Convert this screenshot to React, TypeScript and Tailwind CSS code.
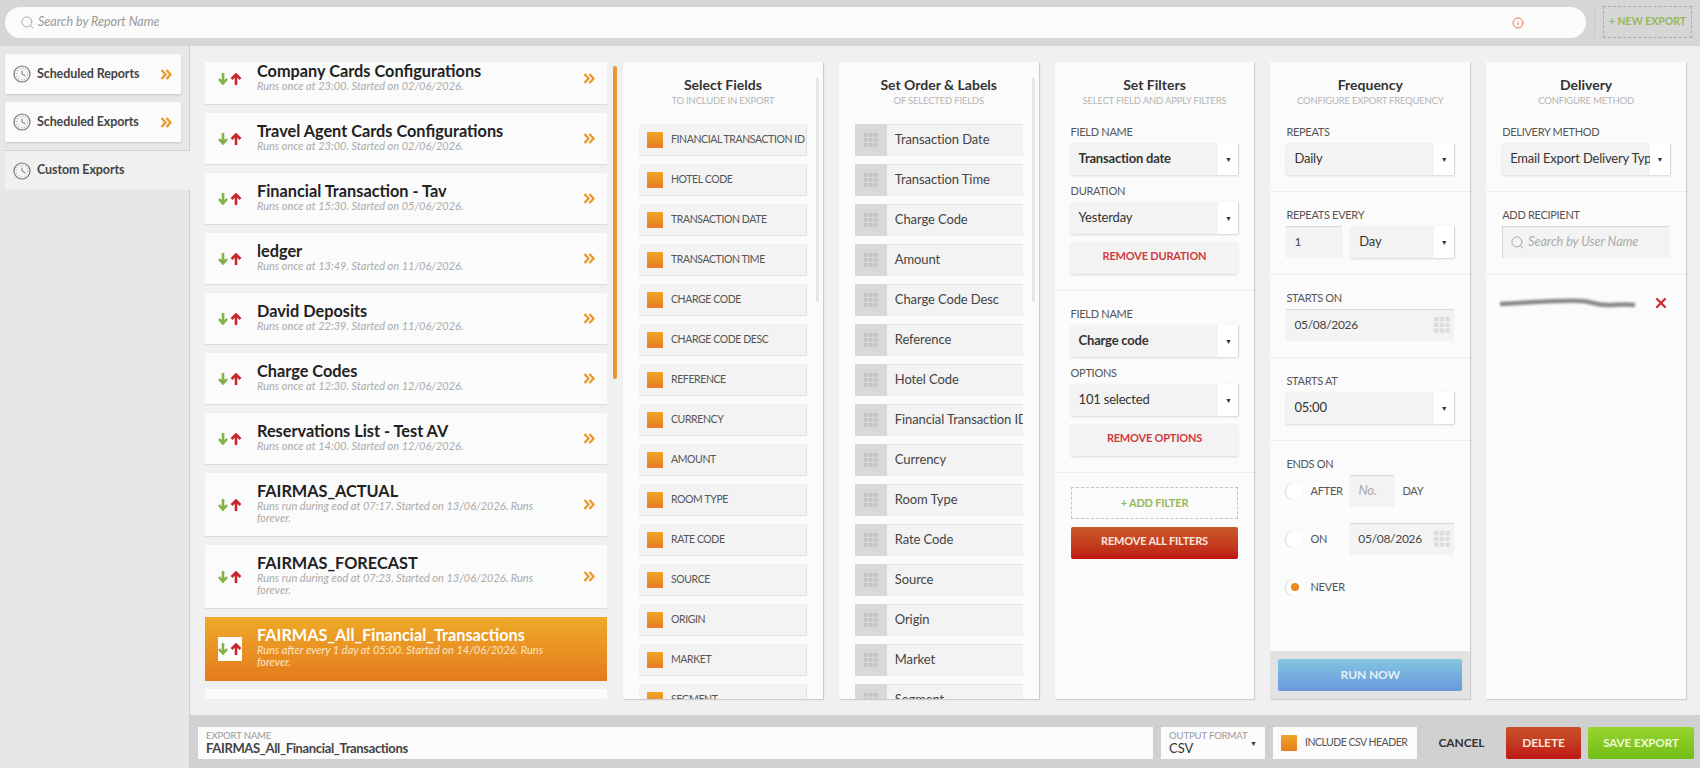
import React from 'react';
import { Info, Search, X } from 'lucide-react';

const REPORTS = [
  { name: 'Company Cards Configurations', sub: 'Runs once at 23:00. Started on 02/06/2026.' },
  { name: 'Travel Agent Cards Configurations', sub: 'Runs once at 23:00. Started on 02/06/2026.' },
  { name: 'Financial Transaction - Tav', sub: 'Runs once at 15:30. Started on 05/06/2026.' },
  { name: 'ledger', sub: 'Runs once at 13:49. Started on 11/06/2026.' },
  { name: 'David Deposits', sub: 'Runs once at 22:39. Started on 11/06/2026.' },
  { name: 'Charge Codes', sub: 'Runs once at 12:30. Started on 12/06/2026.' },
  { name: 'Reservations List - Test AV', sub: 'Runs once at 14:00. Started on 12/06/2026.' },
  { name: 'FAIRMAS_ACTUAL', sub: 'Runs run during eod at 07:17. Started on 13/06/2026. Runs forever.', tall: true },
  { name: 'FAIRMAS_FORECAST', sub: 'Runs run during eod at 07:23. Started on 13/06/2026. Runs forever.', tall: true },
  { name: 'FAIRMAS_All_Financial_Transactions', sub: 'Runs after every 1 day at 05:00. Started on 14/06/2026. Runs forever.', tall: true, active: true },
];

const FIELDS = ['Financial Transaction ID', 'Hotel Code', 'Transaction Date', 'Transaction Time', 'Charge Code', 'Charge Code Desc', 'Reference', 'Currency', 'Amount', 'Room Type', 'Rate Code', 'Source', 'Origin', 'Market', 'Segment'];
const ORDERED = ['Transaction Date', 'Transaction Time', 'Charge Code', 'Amount', 'Charge Code Desc', 'Reference', 'Hotel Code', 'Financial Transaction ID', 'Currency', 'Room Type', 'Rate Code', 'Source', 'Origin', 'Market', 'Segment'];

const Clock = () => (
  <svg width="18" height="18" viewBox="0 0 18 18" fill="none" className="shrink-0">
    <circle cx="9" cy="9" r="8" fill="#f6f6f6" stroke="#777" strokeWidth="1.200" />
    <circle cx="9" cy="9" r="5.800" stroke="#888" strokeWidth="1" strokeDasharray="0.900 2.100" />
    <path d="M9 5.500V9l3.500 2" stroke="#666" strokeWidth="0.900" />
  </svg>
);

const Chevrons = () => (
  <svg width="12" height="11" viewBox="0 0 12 11" fill="none" className="shrink-0">
    <path d="M1.500 1l4 4.500-4 4.500M6.500 1l4 4.500-4 4.500" stroke="#ea9a2d" strokeWidth="2.400" />
  </svg>
);

const Arrows = () => (
  <svg width="24" height="12" viewBox="0 0 24 12" fill="none" className="shrink-0">
    <path d="M5 0v10M1 6l4 4.500L9 6" stroke="#86b04a" strokeWidth="2.600" />
    <path d="M18 12V2M13.500 6L18 1.500 22.500 6" stroke="#c9262e" strokeWidth="2.600" />
  </svg>
);

const Grip = ({ color, size = 14 }: { color: string; size?: number }) => (
  <svg width={size} height={size} viewBox="0 0 14 14" fill={color} className="shrink-0">
    {[0, 5, 10].map((y) =>
      [0, 5, 10].map((x) => <rect key={`${x}-${y}`} x={x} y={y} width="3.800" height="3.800" />)
    )}
  </svg>
);

const Check = () => (
  <div className="h-4 w-4 shrink-0 rounded-[1px] bg-gradient-to-b from-[#f0a428] to-[#e67d1e]" />
);

const Label: React.FC<{ children: React.ReactNode; className?: string }> = ({ children, className = '' }) => (
  <div className={`mb-1 h-[14px] text-[11px] leading-[14px] tracking-[-0.3px] text-[#555] uppercase ${className}`}>{children}</div>
);

const Select: React.FC<{ value: string; bold?: boolean; className?: string }> = ({ value, bold, className = 'w-full' }) => (
  <div className={`flex h-8 ${className} shadow-[0_1px_2px_rgba(0,0,0,0.14)]`}>
    <div className={`flex min-w-0 flex-1 items-center overflow-hidden bg-[#f3f3f3] pb-px pl-2 text-[13px] tracking-[-0.2px] whitespace-nowrap text-[#333] ${bold ? 'font-bold text-[#222]' : ''}`}>
      {value}
    </div>
    <div className="flex w-5 shrink-0 items-center justify-center bg-white text-[7px] text-[#333] shadow-[1px_0_1px_rgba(0,0,0,0.1)]">▼</div>
  </div>
);

const Field: React.FC<{ value: string; className?: string; grid?: boolean }> = ({ value, className = 'w-full', grid }) => (
  <div className={`flex h-8 items-center justify-between bg-[#f3f3f3] pr-[4px] pl-2 text-[12px] tracking-[-0.3px] text-[#444] shadow-[inset_0_1px_1px_rgba(0,0,0,0.12)] ${className}`}>
    <span>{value}</span>
    {grid && <Grip color="#dcdcdc" size={16} />}
  </div>
);

const Btn: React.FC<{ children: React.ReactNode }> = ({ children }) => (
  <div className="mt-2 flex h-8 items-center justify-center bg-[#f3f3f3] pb-[3px] text-[11px] font-bold tracking-[-0.2px] text-[#d23a3f] uppercase shadow-[0_1px_2px_rgba(0,0,0,0.14)]">
    {children}
  </div>
);

const Section: React.FC<{ children: React.ReactNode; last?: boolean }> = ({ children, last }) => (
  <div className={`px-4 pt-4 pb-4 ${last ? '' : 'border-b border-[#ececec]'}`}>{children}</div>
);

const Panel: React.FC<{ title: string; sub: string; children: React.ReactNode; className?: string }> = ({ title, sub, children, className = '' }) => (
  <div className={`relative flex h-[637px] w-[199.8px] shrink-0 flex-col overflow-hidden bg-[#fbfbfb] shadow-[1px_1px_1px_rgba(0,0,0,0.15)] ${className}`}>
    <div className="h-[47px] shrink-0 pt-[13px] text-center">
      <div className="text-[14px] leading-5 font-bold text-[#333]">{title}</div>
      <div className="-mt-px text-[9.500px] leading-[14px] tracking-[-0.2px] text-[#b5b5b5] uppercase">{sub}</div>
    </div>
    {children}
  </div>
);

const Radio: React.FC<{ on?: boolean }> = ({ on }) => (
  <div className="flex h-[17px] w-[17px] shrink-0 items-center justify-center rounded-full bg-white shadow-[-1px_0_1px_rgba(0,0,0,0.15)]">
    {on && <div className="h-2 w-2 rounded-full bg-[#ea8a1e]" />}
  </div>
);

const Tab: React.FC<{ label: string; active?: boolean }> = ({ label, active }) =>
  active ? (
    <div className="relative -mr-px flex h-10 items-center gap-[6px] border-t border-[#d0d0d0] bg-[#f0f0f0] pl-2">
      <Clock />
      <span className="text-[12.500px] font-bold tracking-[-0.1px] text-[#444]">{label}</span>
    </div>
  ) : (
    <div className="mb-2 flex h-10 w-[176px] items-center gap-[6px] bg-[#fbfbfb] pr-[9px] pl-2 shadow-[0_1px_2px_rgba(0,0,0,0.14)]">
      <Clock />
      <span className="flex-1 text-[12.500px] font-bold tracking-[-0.1px] text-[#444]">{label}</span>
      <Chevrons />
    </div>
  );

const ReportCard: React.FC<{ name: string; sub: string; tall?: boolean; active?: boolean }> = ({ name, sub, tall, active }) => (
  <div className={`flex w-full shrink-0 items-center pr-3 pl-[13px] ${tall ? 'h-16' : 'h-[52px]'} ${active ? 'bg-gradient-to-b from-[#eeaa28] to-[#e47a1e]' : 'border-b border-[#dcdcdc] bg-[#fbfbfb]'}`}>
    <div className={`flex h-6 w-6 shrink-0 items-center justify-center ${active ? 'bg-white' : ''}`}>
      <Arrows />
    </div>
    <div className="ml-[15px] min-w-0 flex-1 pr-4 pb-1">
      <div className={`text-[16.300px] leading-[18px] font-bold ${active ? 'text-white' : 'text-[#222]'}`}>{name}</div>
      <div className={`text-[11px] leading-[12px] italic ${active ? 'text-[#fbe6c8]' : 'text-[#aaa]'}`}>{sub}</div>
    </div>
    {!active && <Chevrons />}
  </div>
);

export default function App() {
  return (
    <div className="flex h-[768px] w-[1700px] flex-col overflow-hidden bg-[#f0f0f0] font-[family-name:Lato,sans-serif]">
      {/* top bar */}
      <div className="flex h-[46px] shrink-0 items-start gap-2 bg-[#d6d6d6] pt-[7px] pl-[5px]">
        <div className="flex h-[31px] w-[1581px] items-center rounded-[16px] bg-[#fbfbfb] pr-[62px] pl-[15px]">
          <Search size={15} strokeWidth={1.300} className="text-[#999]" />
          <span className="ml-[3px] text-[12.500px] text-[#999] italic">Search by Report Name</span>
          <Info size={12} className="ml-auto text-[#e8774a]" />
        </div>
        <div className="h-[31px] w-px bg-[#c8c8c8]" />
        <div className="-mt-px flex h-8 w-[89px] items-center justify-center border border-dashed border-[#aaa] text-[10.500px] font-bold whitespace-nowrap text-[#93b95a]">
          + NEW EXPORT
        </div>
      </div>

      <div className="flex min-h-0 flex-1">
        {/* sidebar */}
        <div className="flex w-[190px] shrink-0 flex-col border-r border-[#cfcfcf] bg-[#e7e7e7] pt-2 pl-[5px]">
          <Tab label="Scheduled Reports" />
          <Tab label="Scheduled Exports" />
          <Tab label="Custom Exports" active />
        </div>

        <div className="flex min-w-0 flex-1 flex-col">
          <div className="flex min-h-0 flex-1 pt-4 pl-[15px]">
            {/* report list */}
            <div className="h-[637px] w-[402px] shrink-0 overflow-hidden">
              <div className="-mt-[9px] flex flex-col gap-2">
                {REPORTS.map((r) => (
                  <ReportCard key={r.name} {...r} />
                ))}
                <div className="h-[52px] shrink-0 bg-[#fbfbfb]" />
              </div>
            </div>
            <div className="w-4 shrink-0 pt-1 pl-[6px]">
              <div className="h-[313px] w-1 rounded-sm bg-[#e8982e]" />
            </div>

            <div className="flex gap-4">
              <Panel title="Select Fields" sub="To include in export">
                <div className="absolute top-4 right-1 h-[224px] w-[3px] bg-[#e6e6e6]" />
                <div className="flex flex-col gap-2 pt-[15px] pl-4">
                  {FIELDS.map((f) => (
                    <div key={f} className="flex h-8 w-[168px] shrink-0 items-center gap-2 border-r border-b border-[#e0e0e0] bg-[#f3f3f3] pl-2 text-[10.500px] tracking-[-0.4px] whitespace-nowrap text-[#555] uppercase">
                      <Check />
                      {f}
                    </div>
                  ))}
                </div>
              </Panel>

              <Panel title="Set Order &amp; Labels" sub="Of selected fields">
                <div className="absolute top-4 right-1 h-[224px] w-[3px] bg-[#e6e6e6]" />
                <div className="flex flex-col gap-2 pt-[15px] pl-4">
                  {ORDERED.map((f) => (
                    <div key={f} className="flex h-8 w-[168px] shrink-0 items-center overflow-hidden bg-[#f3f3f3] text-[13px] tracking-[-0.1px] whitespace-nowrap text-[#444] shadow-[inset_0_1px_0_rgba(0,0,0,0.06)]">
                      <div className="mr-2 flex h-8 w-8 shrink-0 items-center justify-center bg-[#d8d8d8]">
                        <Grip color="#c4c4c4" />
                      </div>
                      {f}
                    </div>
                  ))}
                </div>
              </Panel>

              <Panel title="Set Filters" sub="Select field and apply filters">
                <Section>
                  <Label>Field name</Label>
                  <Select value="Transaction date" bold />
                  <Label className="mt-[9px]">Duration</Label>
                  <Select value="Yesterday" />
                  <Btn>Remove duration</Btn>
                </Section>
                <Section>
                  <Label>Field name</Label>
                  <Select value="Charge code" bold />
                  <Label className="mt-[9px]">Options</Label>
                  <Select value="101 selected" />
                  <Btn>Remove options</Btn>
                </Section>
                <div className="px-4 pt-[14px]">
                  <div className="flex h-8 items-center justify-center border border-dashed border-[#c4c4c4] text-[11px] font-bold tracking-[-0.2px] text-[#93b95a]">+ ADD FILTER</div>
                  <div className="mt-2 flex h-8 items-center justify-center rounded-[2px] bg-gradient-to-b from-[#c85a2a] to-[#bf1414] pb-[3px] text-[11px] font-bold tracking-[-0.2px] text-[#fbe6dc]">REMOVE ALL FILTERS</div>
                </div>
              </Panel>

              <Panel title="Frequency" sub="Configure export frequency">
                <Section>
                  <Label>Repeats</Label>
                  <Select value="Daily" />
                </Section>
                <Section>
                  <Label>Repeats every</Label>
                  <div className="flex gap-[9px]">
                    <Field value="1" className="w-[56px]" />
                    <Select value="Day" className="w-[103px]" />
                  </div>
                </Section>
                <Section>
                  <Label>Starts on</Label>
                  <Field value="05/08/2026" grid />
                </Section>
                <Section>
                  <Label>Starts at</Label>
                  <Select value="05:00" />
                </Section>
                <Section last>
                  <Label>Ends on</Label>
                  <div className="flex flex-col gap-4">
                    <div className="flex h-8 items-center text-[11px] tracking-[-0.2px] text-[#555]">
                      <Radio />
                      <span className="ml-[7px] w-[40px]">AFTER</span>
                      <div className="flex h-8 w-11 items-center bg-[#f3f3f3] pl-2 text-[13px] text-[#aaa] italic shadow-[inset_0_1px_1px_rgba(0,0,0,0.12)]">No.</div>
                      <span className="ml-2">DAY</span>
                    </div>
                    <div className="flex h-8 items-center text-[11px] tracking-[-0.2px] text-[#555]">
                      <Radio />
                      <span className="ml-[7px] w-[40px]">ON</span>
                      <Field value="05/08/2026" grid className="w-[104px]" />
                    </div>
                    <div className="flex h-8 items-center text-[11px] tracking-[-0.2px] text-[#555]">
                      <Radio on />
                      <span className="ml-[7px]">NEVER</span>
                    </div>
                  </div>
                </Section>
                <div className="mt-auto h-12 bg-[#e2e2e2] px-2 pt-2">
                  <div className="flex h-8 items-center justify-center rounded-[2px] bg-gradient-to-b from-[#82c6e0] to-[#6a98dc] text-[12px] font-bold tracking-[-0.1px] text-[#e4f1f8]">RUN NOW</div>
                </div>
              </Panel>

              <Panel title="Delivery" sub="Configure method">
                <Section>
                  <Label>Delivery method</Label>
                  <Select value="Email Export Delivery Type" />
                </Section>
                <Section>
                  <Label>Add recipient</Label>
                  <div className="flex h-8 items-center bg-[#f3f3f3] pl-2 text-[12.500px] text-[#aaa] italic shadow-[inset_1px_1px_1px_rgba(0,0,0,0.12)]">
                    <Search size={15} strokeWidth={1.300} className="mr-[3px] text-[#999]" />
                    Search by User Name
                  </div>
                </Section>
                <div className="flex items-center pt-[20px] pr-[17px] pl-[11px]">
                  <svg width="140" height="14" viewBox="0 0 140 14" fill="none">
                    <path d="M3 8C30 7 55 4 85 5c12 1 12 4 26 4 8 0 18-1 27 0" stroke="#8a8a8a" strokeWidth="4.500" className="blur-[1.200px]" />
                  </svg>
                  <X size={16} strokeWidth={3.500} className="ml-auto text-[#cf2f36]" />
                </div>
              </Panel>
            </div>
          </div>

          {/* bottom bar */}
          <div className="flex h-[53px] shrink-0 items-start gap-2 bg-[#d1d1d1] pt-3 pr-[6px] pl-2">
            <div className="flex h-8 w-[955px] flex-col justify-center bg-[#fbfbfb] pl-2">
              <div className="text-[9.500px] leading-[11px] tracking-[-0.1px] text-[#999] uppercase">Export name</div>
              <div className="text-[13px] leading-[15px] font-bold tracking-[-0.35px] text-[#444]">FAIRMAS_All_Financial_Transactions</div>
            </div>
            <div className="relative flex h-8 w-[104px] flex-col justify-center bg-[#fbfbfb] pl-2">
              <div className="text-[9.500px] leading-[11px] tracking-[-0.1px] whitespace-nowrap text-[#999] uppercase">Output format</div>
              <div className="text-[13px] leading-[15px] text-[#333]">CSV</div>
              <span className="absolute top-[11px] right-[8px] text-[7px] text-[#333]">▼</span>
            </div>
            <div className="flex h-8 w-[144px] items-center gap-[8px] bg-[#fbfbfb] pl-2 text-[10.500px] tracking-[-0.5px] whitespace-nowrap text-[#555]">
              <Check />
              INCLUDE CSV HEADER
            </div>
            <div className="flex h-8 flex-1 items-center justify-center text-[12px] font-bold tracking-[-0.1px] text-[#333]">CANCEL</div>
            <div className="flex h-8 w-[75px] items-center justify-center rounded-[2px] bg-gradient-to-b from-[#c8502a] to-[#bf1414] text-[12px] font-bold tracking-[-0.1px] text-[#fbe6dc]">DELETE</div>
            <div className="-ml-px flex h-8 w-[106px] items-center justify-center rounded-[2px] bg-gradient-to-b from-[#9ad42f] to-[#6fbf15] text-[11.500px] font-bold text-[#effadb]">SAVE EXPORT</div>
          </div>
        </div>
      </div>
    </div>
  );
}
